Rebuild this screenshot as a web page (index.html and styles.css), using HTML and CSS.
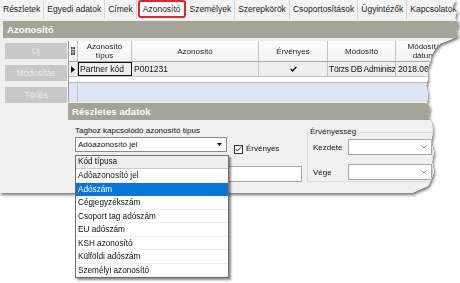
FILE: index.html
```html
<!DOCTYPE html>
<html lang="hu">
<head>
<meta charset="utf-8">
<title>Azonosító</title>
<link rel="stylesheet" href="styles.css">
</head>
<body>
<div class="page">
  <div class="sheet-shadow">
    <div class="sheet">
      <div class="tabs">
        <span class="tab">Részletek</span>
        <span class="tab">Egyedi adatok</span>
        <span class="tab">Címek</span>
        <span class="tab active">Azonosító</span>
        <span class="tab">Személyek</span>
        <span class="tab">Szerepkörök</span>
        <span class="tab">Csoportosítások</span>
        <span class="tab">Ügyintézők</span>
        <span class="tab last">Kapcsolatok</span>
      </div>
      <div class="window">
        <div class="title">Azonosító</div>
        <div class="body">
          <div class="side">
            <div class="btn">Új</div>
            <div class="btn">Módosítás</div>
            <div class="btn">Törlés</div>
          </div>
          <div class="main">
            <div class="grid">
              <div class="grow ghead">
                <div class="cell c-ind"><svg width="4" height="8" viewBox="0 0 4 8"><rect x="0" y="0" width="4" height="8" fill="#444"/><path d="M0 2.5H4M0 5H4M2 0V8" stroke="#ddd" stroke-width="0.8"/></svg></div>
                <div class="cell c-typ">Azonosító<br>típus</div>
                <div class="cell c-az">Azonosító</div>
                <div class="cell c-erv">Érvényes</div>
                <div class="cell c-mod">Módosító</div>
                <div class="cell c-dat">Módosítás<br>dátuma</div>
              </div>
              <div class="grow gdata">
                <div class="cell c-ind"><svg width="4" height="7" viewBox="0 0 4 7"><path d="M0 0L4 3.5L0 7Z" fill="#111"/></svg></div>
                <div class="cell c-typ focus">Partner kód</div>
                <div class="cell c-az">P001231</div>
                <div class="cell c-erv center"><svg width="7" height="6" viewBox="0 0 7 6"><path d="M0.6 3L2.6 5L6.4 0.8" fill="none" stroke="#111" stroke-width="1.4"/></svg></div>
                <div class="cell c-mod">Törzs DB Adminisz</div>
                <div class="cell c-dat">2018.06</div>
              </div>
              <div class="gblank"></div>
              <div class="gnew"><div class="c-ind"></div></div>
            </div>
            <div class="title sub">Részletes adatok</div>
            <div class="details">
              <div class="col1">
                <div class="lbl">Taghoz kapcsolódó azonosító típus</div>
                <div class="crow">
                  <div class="combo"><span>Adóazonosító jel</span><svg width="5" height="3" viewBox="0 0 5 3"><path d="M0 0H5L2.5 3Z" fill="#111"/></svg></div>
                  <div class="chk"><span class="box"><svg width="7" height="6" viewBox="0 0 7 6"><path d="M0.5 3L2.5 5L6.5 0.6" fill="none" stroke="#222" stroke-width="0.9"/></svg></span>Érvényes</div>
                </div>
                <div class="textin"></div>
              </div>
              <div class="group">
                <div class="legend">Érvényesség</div>
                <div class="frow">
                  <span class="flbl">Kezdete</span>
                  <div class="date"><svg width="6" height="4" viewBox="0 0 6 4"><path d="M0.5 0.5L3 3L5.5 0.5" fill="none" stroke="#777" stroke-width="0.9"/></svg></div>
                </div>
                <div class="frow">
                  <span class="flbl">Vége</span>
                  <div class="date"><svg width="6" height="4" viewBox="0 0 6 4"><path d="M0.5 0.5L3 3L5.5 0.5" fill="none" stroke="#777" stroke-width="0.9"/></svg></div>
                </div>
              </div>
            </div>
          </div>
        </div>
      </div>
    </div>
  </div>
  <div class="dropdown">
    <div class="dhead">Kód típusa</div>
    <div class="ditem">Adóazonosító jel</div>
    <div class="ditem sel">Adószám</div>
    <div class="ditem">Cégjegyzékszám</div>
    <div class="ditem">Csoport tag adószám</div>
    <div class="ditem">EU adószám</div>
    <div class="ditem">KSH azonosító</div>
    <div class="ditem">Külföldi adószám</div>
    <div class="ditem">Személyi azonosító</div>
  </div>
</div>
</body>
</html>
```

FILE: styles.css
```css
* { box-sizing: border-box; }
html, body { margin: 0; padding: 0; background: #fff; }
body {
  font-family: "Liberation Sans", Arial, sans-serif;
  color: #111;
  width: 460px;
  height: 283px;
  overflow: hidden;
}
.page { position: relative; width: 460px; height: 283px; }

.sheet-shadow { filter: drop-shadow(1px 2px 1.5px rgba(0,0,0,0.55)); }
.sheet {
  width: 460px;
  height: 193px;
  background: #f0f0f0;
  clip-path: polygon(0 0, 456px 0, 453px 6px, 457px 12px, 455px 18px, 459px 24px, 456px 30px, 458px 36px, 450px 40px, 441px 43px, 436px 48px, 432px 54px, 430px 62px, 427px 70px, 428px 78px, 426px 86px, 428px 94px, 427px 102px, 430px 108px, 428px 116px, 432px 124px, 433px 132px, 431px 142px, 434px 152px, 432px 162px, 434px 172px, 431px 180px, 428px 186px, 421px 189px, 412px 193px, 0 193px);
  display: flex;
  flex-direction: column;
}

/* tabs */
.tabs {
  height: 19px;
  display: flex;
  align-items: stretch;
  background: #f4f4f4;
  font-size: 8.5px;
  padding-left: 0;
}
.tab {
  padding: 0 3px;
  line-height: 18px;
  border-right: 1px solid #d6d6d6;
  color: #222;
  white-space: nowrap;
}
.tab.active {
  border: 2px solid #d52a2e;
  border-radius: 3px;
  background: #fff;
  line-height: 14px;
  margin: 0 1px 1px 1px;
  padding: 0 3px;
}
.tab.last { border-right: none; }

/* window */
.window {
  flex: 1;
  padding: 2px 0 0 3px;
  background: #f0f0f0;
  display: flex;
  flex-direction: column;
}
.title {
  height: 17px;
  background: #a5a396;
  color: #fff;
  font-weight: bold;
  font-size: 9.5px;
  line-height: 17px;
  padding-left: 4px;
  letter-spacing: 0.1px;
}
.body { flex: 1; display: flex; }
.side {
  width: 65px;
  padding: 5px 0 0 2px;
  display: flex;
  flex-direction: column;
  gap: 6px;
}
.btn {
  width: 62px;
  height: 16px;
  background: #c8c8c8;
  color: #ececec;
  font-size: 8.5px;
  line-height: 16px;
  text-align: center;
}
.main { flex: 1; display: flex; flex-direction: column; }

/* grid */
.grid {
  margin-top: 3px;
  background: #fff;
  border-left: 1px solid #9c9c9c;
}
.grow { display: flex; }
.cell {
  border-right: 1px solid #c4c4c4;
  white-space: nowrap;
  overflow: hidden;
  flex: none;
}
.c-ind { width: 9px; display: flex; align-items: center; justify-content: center; }
.c-typ { width: 54px; }
.c-az { width: 127px; }
.c-erv { width: 69px; }
.c-mod { width: 68px; }
.c-dat { width: 60px; border-right: none; }
.ghead {
  height: 21px;
  background: linear-gradient(#fdfdfd, #f3f3f3);
  border-bottom: 1px solid #a8a8a8;
  font-size: 8px;
  line-height: 9px;
  color: #222;
}
.ghead .cell { display: flex; align-items: center; justify-content: center; text-align: center; }
.gdata {
  height: 15px;
  background: #efefef;
  border-bottom: 1px solid #c4c4c4;
  font-size: 8.5px;
  line-height: 14px;
}
.gdata .cell { padding-left: 2px; }
.gdata .c-ind { padding-left: 0; }
.gdata .center { padding-left: 0; display: flex; align-items: center; justify-content: center; }
.gdata .focus { border: 1px solid #111; line-height: 12px; padding-left: 1px; }
.gdata .c-mod { letter-spacing: -0.3px; padding-left: 1px; }
.gblank { height: 6px; background: #fff; border-bottom: 1px solid #b8b8b8; }
.gnew { height: 19px; background: #dce6f3; display: flex; }
.gnew .c-ind { border-right: 1px solid #c4c4c4; }

.title.sub { margin-top: 1px; }

/* details */
.details {
  flex: 1;
  display: flex;
  padding: 5px 0 0 7px;
  font-size: 8px;
  background: #f0f0f0;
}
.col1 { width: 227px; display: flex; flex-direction: column; }
.lbl { line-height: 11px; height: 11px; color: #111; }
.crow { display: flex; align-items: flex-start; margin-top: 1px; }
.combo {
  width: 152px;
  height: 15px;
  background: #fff;
  border: 1px solid #8a8a8a;
  display: flex;
  align-items: center;
  justify-content: space-between;
  padding: 0 4px 0 2px;
}
.chk {
  display: flex;
  align-items: center;
  margin: 7px 0 0 7px;
  gap: 3px;
  line-height: 10px;
}
.box {
  width: 9px;
  height: 9px;
  border: 1px solid #333;
  background: #fff;
  display: flex;
  align-items: center;
  justify-content: center;
}
.textin {
  margin-top: 12px;
  width: 227px;
  height: 16px;
  background: #fff;
  border: 1px solid #a6a6a6;
}
.group {
  margin: 7px 0 0 5px;
  width: 126px;
  height: 50px;
  border: 1px solid #dadada;
  position: relative;
  padding: 6px 0 0 5px;
}
.legend {
  position: absolute;
  top: -6px;
  left: 1px;
  padding: 0 1px;
  background: #f0f0f0;
  line-height: 10px;
  color: #222;
}
.frow { display: flex; align-items: center; height: 16px; margin-bottom: 9px; }
.flbl { width: 35px; }
.date {
  width: 84px;
  height: 16px;
  background: #fff;
  border: 1px solid #a6a6a6;
  display: flex;
  align-items: center;
  justify-content: flex-end;
  padding-right: 4px;
}

/* dropdown overlay */
.dropdown {
  position: absolute;
  left: 75px;
  top: 155px;
  width: 154px;
  background: #fff;
  border: 1px solid #6e6e6e;
  box-shadow: 2px 2px 2px rgba(0,0,0,0.45);
  font-size: 8.2px;
}
.dhead {
  height: 13px;
  line-height: 12px;
  background: #efefef;
  border-bottom: 1px solid #c8c8c8;
  padding-left: 2px;
}
.ditem {
  height: 13.5px;
  line-height: 13px;
  padding-left: 2px;
  border-bottom: 1px solid #f0f0f0;
}
.ditem.sel { background: #0a74d8; color: #fff; border-bottom-color: #0a74d8; }
```
